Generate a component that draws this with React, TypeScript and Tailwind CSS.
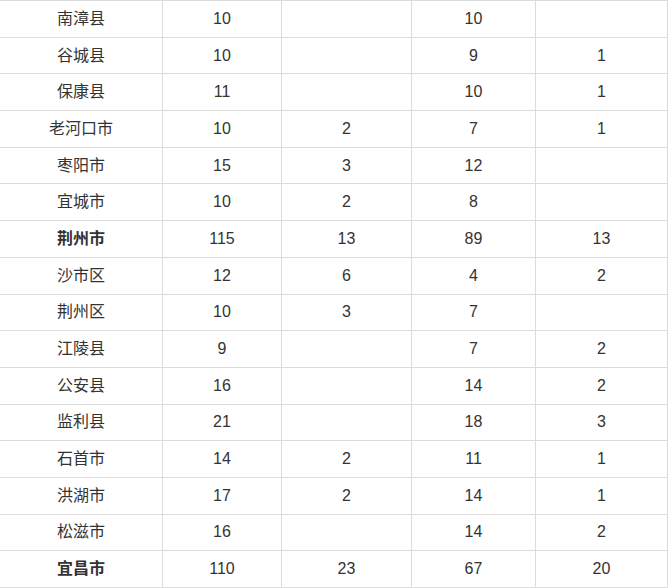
import React from "react";

type Row = {
  name: string;
  total: string;
  a: string;
  b: string;
  c: string;
  bold?: boolean;
};

const rows: Row[] = [
  { name: "南漳县", total: "10", a: "", b: "10", c: "" },
  { name: "谷城县", total: "10", a: "", b: "9", c: "1" },
  { name: "保康县", total: "11", a: "", b: "10", c: "1" },
  { name: "老河口市", total: "10", a: "2", b: "7", c: "1" },
  { name: "枣阳市", total: "15", a: "3", b: "12", c: "" },
  { name: "宜城市", total: "10", a: "2", b: "8", c: "" },
  { name: "荆州市", total: "115", a: "13", b: "89", c: "13", bold: true },
  { name: "沙市区", total: "12", a: "6", b: "4", c: "2" },
  { name: "荆州区", total: "10", a: "3", b: "7", c: "" },
  { name: "江陵县", total: "9", a: "", b: "7", c: "2" },
  { name: "公安县", total: "16", a: "", b: "14", c: "2" },
  { name: "监利县", total: "21", a: "", b: "18", c: "3" },
  { name: "石首市", total: "14", a: "2", b: "11", c: "1" },
  { name: "洪湖市", total: "17", a: "2", b: "14", c: "1" },
  { name: "松滋市", total: "16", a: "", b: "14", c: "2" },
  { name: "宜昌市", total: "110", a: "23", b: "67", c: "20", bold: true },
];

const cell = "border border-[#dcdcdc] text-center align-middle p-0";

const App: React.FC = () => {
  return (
    <div className="w-[669px] h-[588px] overflow-hidden bg-white">
      <table
        className="border-collapse table-fixed w-[668px] -ml-px text-[16px] text-[#333333]"
        style={{ fontFamily: '"Liberation Sans", "Noto Sans CJK SC", sans-serif' }}
      >
        <colgroup>
          <col className="w-[163px]" />
          <col className="w-[119px]" />
          <col className="w-[130px]" />
          <col className="w-[124px]" />
          <col className="w-[132px]" />
        </colgroup>
        <tbody>
          {rows.map((r) => (
            <tr key={r.name} className="h-[36.7px]">
              <td className={`${cell} ${r.bold ? "font-bold" : ""}`}>{r.name}</td>
              <td className={cell}>{r.total}</td>
              <td className={cell}>{r.a}</td>
              <td className={cell}>{r.b}</td>
              <td className={cell}>{r.c}</td>
            </tr>
          ))}
        </tbody>
      </table>
    </div>
  );
};

export default App;
